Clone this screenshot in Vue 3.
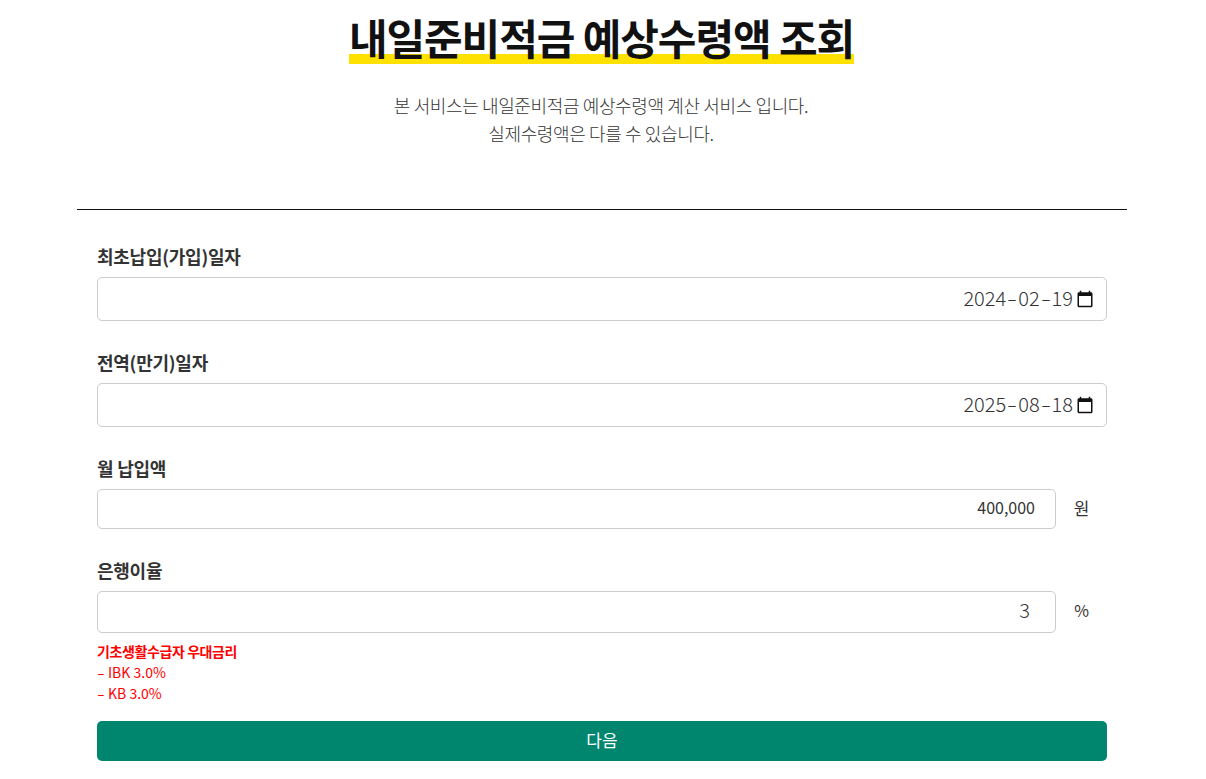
<script setup>
const dates = [
  { id: 'f1', label: '최초납입(가입)일자', parts: ['2024', '02', '19'] },
  { id: 'f2', label: '전역(만기)일자', parts: ['2025', '08', '18'] }
]
</script>

<template>
  <main class="page">
    <header class="head">
      <h1 class="title"><span class="mark">내일준비적금 예상수령액 조회</span></h1>
      <p class="desc">본 서비스는 내일준비적금 예상수령액 계산 서비스 입니다.<br />실제수령액은 다를 수 있습니다.</p>
    </header>
    <form class="form" @submit.prevent>
      <div v-for="d in dates" :key="d.id" class="field" :class="d.id">
        <label class="label">{{ d.label }}</label>
        <div class="box date">
          <span class="date-text">{{ d.parts[0] }}<span class="sep">-</span>{{ d.parts[1] }}<span class="sep">-</span>{{ d.parts[2] }}</span>
          <svg class="cal" viewBox="0 0 24 24" aria-hidden="true"><path d="M20 3h-1V1h-2v2H7V1H5v2H4c-1.1 0-2 .9-2 2v16c0 1.1.9 2 2 2h16c1.1 0 2-.9 2-2V5c0-1.1-.9-2-2-2zm0 18H4V8h16v13z" /></svg>
        </div>
      </div>
      <div class="field f3">
        <label class="label">월 납입액</label>
        <div class="row">
          <input class="box small" type="text" value="400,000" />
          <span class="unit">원</span>
        </div>
      </div>
      <div class="field f4">
        <label class="label">은행이율</label>
        <div class="row">
          <input class="box rate" type="text" value="3" />
          <span class="unit pct">%</span>
        </div>
      </div>
      <div class="note">
        <strong>기초생활수급자 우대금리</strong>
        <span><span class="dash">-</span>IBK 3.0%</span>
        <span><span class="dash">-</span>KB 3.0%</span>
      </div>
      <button class="next" type="submit">다음</button>
    </form>
  </main>
</template>

<style>
html, body { margin: 0; background: #fff; }
</style>

<style scoped>
.page {
  width: 1050px;
  margin-left: 77px;
  font-family: "Noto Sans CJK KR", "Noto Sans", sans-serif;
  color: #333;
}
.head {
  height: 209px;
  border-bottom: 1px solid #111;
  text-align: center;
}
.title {
  margin: 0;
  padding-top: 8px;
  padding-right: 1px;
  font-size: 42px;
  line-height: 58px;
  font-weight: 700;
  letter-spacing: -1.08px;
  color: #111;
}
.mark {
  display: inline-block;
  line-height: 54px;
  background: linear-gradient(transparent 44px, #ffe100 44px);
}
.desc {
  margin: 0;
  padding-top: 25px;
  padding-right: 2px;
  font-size: 18px;
  line-height: 28px;
  font-weight: 300;
  letter-spacing: -0.37px;
  color: #333;
}
.form { padding: 0 20px; }
.field { display: flex; flex-direction: column; }
.f1 { padding-top: 33px; }
.f2, .f3, .f4 { padding-top: 28px; }
.label {
  font-size: 18px;
  line-height: 26px;
  font-weight: 700;
  letter-spacing: -0.25px;
  color: #333;
  margin-bottom: 8px;
}
.box {
  box-sizing: border-box;
  width: 100%;
  border: 1px solid #ccc;
  border-radius: 5px;
  background: #fff;
  text-align: right;
  font-family: inherit;
  outline: none;
  color: #333;
}
.date {
  display: flex;
  align-items: center;
  height: 44px;
  padding-right: 12px;
}
.date-text {
  flex: 1;
  min-width: 0;
  margin-right: 3px;
  padding-bottom: 4px;
  text-align: right;
  font-size: 20px;
  font-weight: 300;
  color: #333;
}
.sep {
  display: inline-block;
  width: 12px;
  text-align: center;
  transform: scaleX(1.5);
}
.cal { width: 18px; height: 18px; fill: #111; flex: none; }
.small {
  height: 40px;
  padding: 0 20px 5px 12px;
  font-size: 16px;
  color: #333;
}
.rate {
  height: 42px;
  padding: 0 25px 5px 12px;
  font-size: 20px;
  font-weight: 300;
}
.row { display: flex; align-items: center; }
.row .box { flex: 1; width: auto; min-width: 0; }
.unit {
  width: 51px;
  padding-bottom: 3px;
  text-align: center;
  font-size: 17px;
  color: #333;
}
.pct { padding-bottom: 5px; font-size: 16px; }
.note {
  display: flex;
  flex-direction: column;
  margin-top: 8px;
  font-size: 14px;
  line-height: 21px;
  color: #f00;
}
.note strong { font-weight: 700; letter-spacing: -0.4px; }
.dash {
  display: inline-block;
  width: 11px;
  transform: scaleX(1.6);
  transform-origin: left center;
}
.next {
  display: block;
  width: 100%;
  height: 40px;
  margin-top: 17px;
  padding: 0 0 3px;
  border: 0;
  border-radius: 5px;
  background: #00856f;
  color: #fff;
  font-family: inherit;
  font-size: 17px;
}
</style>
